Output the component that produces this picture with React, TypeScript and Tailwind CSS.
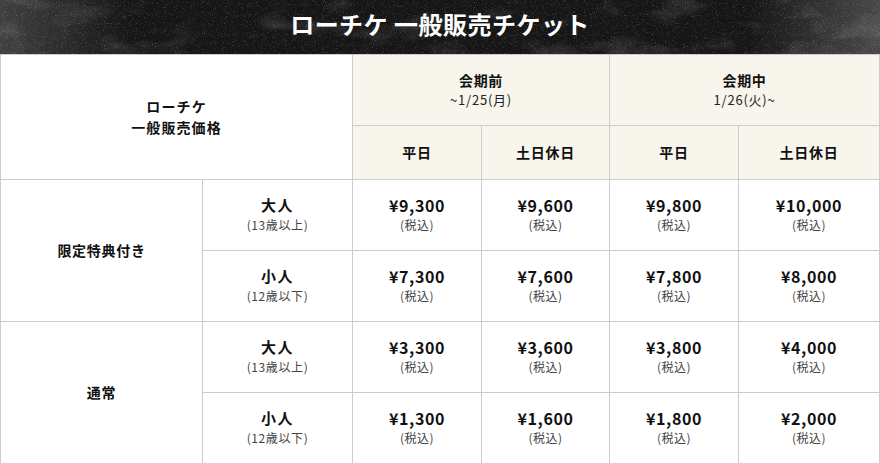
import React from "react";

const font = { fontFamily: '"Noto Sans CJK JP", "Noto Sans", sans-serif' };

type Row = { label: string; age: string; prices: string[] };
const groups: { name: string; rows: Row[] }[] = [
  {
    name: "限定特典付き",
    rows: [
      { label: "大人", age: "(13歳以上)", prices: ["¥9,300", "¥9,600", "¥9,800", "¥10,000"] },
      { label: "小人", age: "(12歳以下)", prices: ["¥7,300", "¥7,600", "¥7,800", "¥8,000"] },
    ],
  },
  {
    name: "通常",
    rows: [
      { label: "大人", age: "(13歳以上)", prices: ["¥3,300", "¥3,600", "¥3,800", "¥4,000"] },
      { label: "小人", age: "(12歳以下)", prices: ["¥1,300", "¥1,600", "¥1,800", "¥2,000"] },
    ],
  },
];

function Texture() {
  return (
    <svg className="absolute inset-0 h-full w-full" width="880" height="54" preserveAspectRatio="none">
      <defs>
        <filter id="n" x="0" y="0" width="100%" height="100%">
          <feTurbulence type="fractalNoise" baseFrequency="0.9" numOctaves="2" seed="3" />
          <feColorMatrix values="0 0 0 0 1  0 0 0 0 1  0 0 0 0 1  0 0 0 1.6 -0.95" />
        </filter>
        <filter id="m" x="0" y="0" width="100%" height="100%">
          <feTurbulence type="fractalNoise" baseFrequency="0.02 0.05" numOctaves="3" seed="7" />
          <feColorMatrix values="0 0 0 0 1  0 0 0 0 1  0 0 0 0 1  0 0 0 0.9 -0.45" />
        </filter>
        <linearGradient id="g" x1="0" x2="1" y1="0" y2="0">
          <stop offset="0" stopColor="#fff" stopOpacity="0.18" />
          <stop offset="0.15" stopColor="#fff" stopOpacity="0" />
          <stop offset="0.85" stopColor="#fff" stopOpacity="0" />
          <stop offset="1" stopColor="#fff" stopOpacity="0.22" />
        </linearGradient>
      </defs>
      <rect width="880" height="54" fill="#161616" />
      <rect width="880" height="54" filter="url(#m)" opacity="0.35" />
      <rect width="880" height="54" filter="url(#n)" opacity="0.55" />
      <rect width="880" height="54" fill="url(#g)" />
    </svg>
  );
}

export default function App() {
  const b = "border border-[#cccccc]";
  const hd = `${b} bg-[#f7f5ec] text-center align-middle`;
  return (
    <div className="w-[880px] h-[463px] overflow-hidden bg-white text-[#111]" style={font}>
      <div className="relative h-[54px] flex items-center justify-center">
        <Texture />
        <h1 className="relative text-white text-[24px] font-bold tracking-[0.02em] leading-none -mt-[6px]">
          ローチケ 一般販売チケット
        </h1>
      </div>
      <table className="w-[880px] border-collapse table-fixed">
        <colgroup>
          <col className="w-[202px]" />
          <col className="w-[150px]" />
          <col className="w-[129px]" />
          <col className="w-[128px]" />
          <col className="w-[129px]" />
          <col />
        </colgroup>
        <thead>
          <tr className="h-[71px]">
            <th rowSpan={2} colSpan={2} className={`${b} bg-white text-center align-middle text-[14px] font-bold leading-[21px] tracking-[0.08em]`}>
              ローチケ
              <br />
              一般販売価格
            </th>
            <th colSpan={2} className={hd}>
              <div className="text-[14px] font-bold leading-[20px] tracking-[0.05em]">会期前</div>
              <div className="text-[13px] font-normal leading-[20px] text-[#222] tracking-[0.06em]">~1/25(月)</div>
            </th>
            <th colSpan={2} className={hd}>
              <div className="text-[14px] font-bold leading-[20px] tracking-[0.05em]">会期中</div>
              <div className="text-[13px] font-normal leading-[20px] text-[#222] tracking-[0.06em]">1/26(火)~</div>
            </th>
          </tr>
          <tr className="h-[54px]">
            {["平日", "土日休日", "平日", "土日休日"].map((t, i) => (
              <th key={i} className={`${hd} text-[14px] font-bold tracking-[0.05em]`}>
                {t}
              </th>
            ))}
          </tr>
        </thead>
        <tbody>
          {groups.map((g) =>
            g.rows.map((r, ri) => (
              <tr key={g.name + ri} className="h-[71px]">
                {ri === 0 && (
                  <td rowSpan={2} className={`${b} text-center align-middle text-[14px] font-bold tracking-[0.05em]`}>
                    {g.name}
                  </td>
                )}
                <td className={`${b} text-center align-middle`}>
                  <div className="text-[15px] font-bold leading-[20px] tracking-[0.1em]">{r.label}</div>
                  <div className="text-[12px] leading-[20px] text-[#444] tracking-[0.05em]">{r.age}</div>
                </td>
                {r.prices.map((p, pi) => (
                  <td key={pi} className={`${b} text-center align-middle`}>
                    <div className="text-[16px] font-bold leading-[20px] tracking-[0.04em]">{p}</div>
                    <div className="text-[12px] leading-[20px] text-[#444] tracking-[0.04em]">(税込)</div>
                  </td>
                ))}
              </tr>
            ))
          )}
        </tbody>
      </table>
    </div>
  );
}
